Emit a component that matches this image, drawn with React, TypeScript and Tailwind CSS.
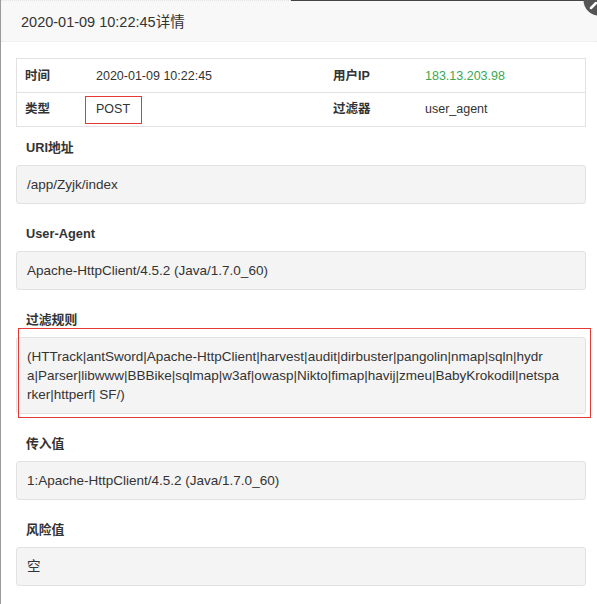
import React from "react";

const font = {
  fontFamily: "'Liberation Sans', 'Noto Sans CJK SC', sans-serif",
};

const Field = ({
  label,
  children,
  marked,
  first,
}: {
  label: string;
  children: React.ReactNode;
  marked?: boolean;
  first?: boolean;
}) => (
  <div className={first ? "mt-[11px]" : "mt-[20px]"}>
    <div className="pl-[10px] h-[20px] leading-[20px] text-[12.8px] font-bold text-[#333]">
      {label}
    </div>
    <div className="relative mt-[7px]">
      <div className="bg-[#f4f4f4] border border-[#e2e2e2] rounded-[3px] px-[10px] py-[9px] text-[13.5px] leading-[19px] text-[#333]">
        {children}
      </div>
      {marked && (
        <div className="absolute top-[-9px] left-[2px] right-[-5px] bottom-[-4px] border border-[#e53935] pointer-events-none" />
      )}
    </div>
  </div>
);

const ruleLines = [
  "(HTTrack|antSword|Apache-HttpClient|harvest|audit|dirbuster|pangolin|nmap|sqln|hydr",
  "a|Parser|libwww|BBBike|sqlmap|w3af|owasp|Nikto|fimap|havij|zmeu|BabyKrokodil|netspa",
  "rker|httperf| SF/)",
];

export default function App() {
  return (
    <div
      className="relative w-[597px] h-[604px] overflow-hidden bg-white border-l border-[#9a9a9a]"
      style={font}
    >
      {/* header */}
      <div className="h-[42px] bg-[#f8f8f8] border-t border-[#e4e4e4] border-b border-dotted border-b-[#e8e8e8] flex items-center pl-[20px] pt-[3px] text-[14.5px] text-[#333]">
        2020-01-09 10:22:45详情
      </div>
      <div className="absolute top-0 left-[290px] w-[300px] h-px bg-[#444]" />
      <svg
        className="absolute top-[-16px] right-[-18px]"
        width="32"
        height="32"
        viewBox="0 0 32 32"
      >
        <circle cx="16" cy="16" r="15.5" fill="#555" />
        <path d="M8 24 L13 19" stroke="#fff" strokeWidth="2.5" strokeLinecap="round" />
      </svg>

      <div className="pl-[15px] pr-[11px] pt-[16px]">
        {/* info table */}
        <div className="border border-[#e2e2e2] text-[12.5px] text-[#333]">
          <div className="grid grid-cols-[70px_237px_92px_1fr] h-[34px] items-center border-b border-[#e2e2e2] pt-[1px]">
            <div className="pl-[8px] font-bold">时间</div>
            <div className="pl-[9px]">2020-01-09 10:22:45</div>
            <div className="pl-[9px] font-bold">用户IP</div>
            <div className="pl-[9px] text-[#3aa853]">183.13.203.98</div>
          </div>
          <div className="grid grid-cols-[70px_237px_92px_1fr] h-[33px] items-center">
            <div className="pl-[8px] font-bold">类型</div>
            <div className="pl-[9px]">
              <span className="ml-[-11px] inline-flex items-center h-[28px] w-[57px] pl-[10px] border border-[#e53935]">
                POST
              </span>
            </div>
            <div className="pl-[9px] font-bold">过滤器</div>
            <div className="pl-[9px]">user_agent</div>
          </div>
        </div>

        <Field label="URI地址" first>
          /app/Zyjk/index
        </Field>
        <Field label="User-Agent">Apache-HttpClient/4.5.2 (Java/1.7.0_60)</Field>
        <Field label="过滤规则" marked>
          {ruleLines.map((l) => (
            <div key={l} className="whitespace-nowrap">
              {l}
            </div>
          ))}
        </Field>
        <Field label="传入值">1:Apache-HttpClient/4.5.2 (Java/1.7.0_60)</Field>
        <Field label="风险值">空</Field>
      </div>
    </div>
  );
}
